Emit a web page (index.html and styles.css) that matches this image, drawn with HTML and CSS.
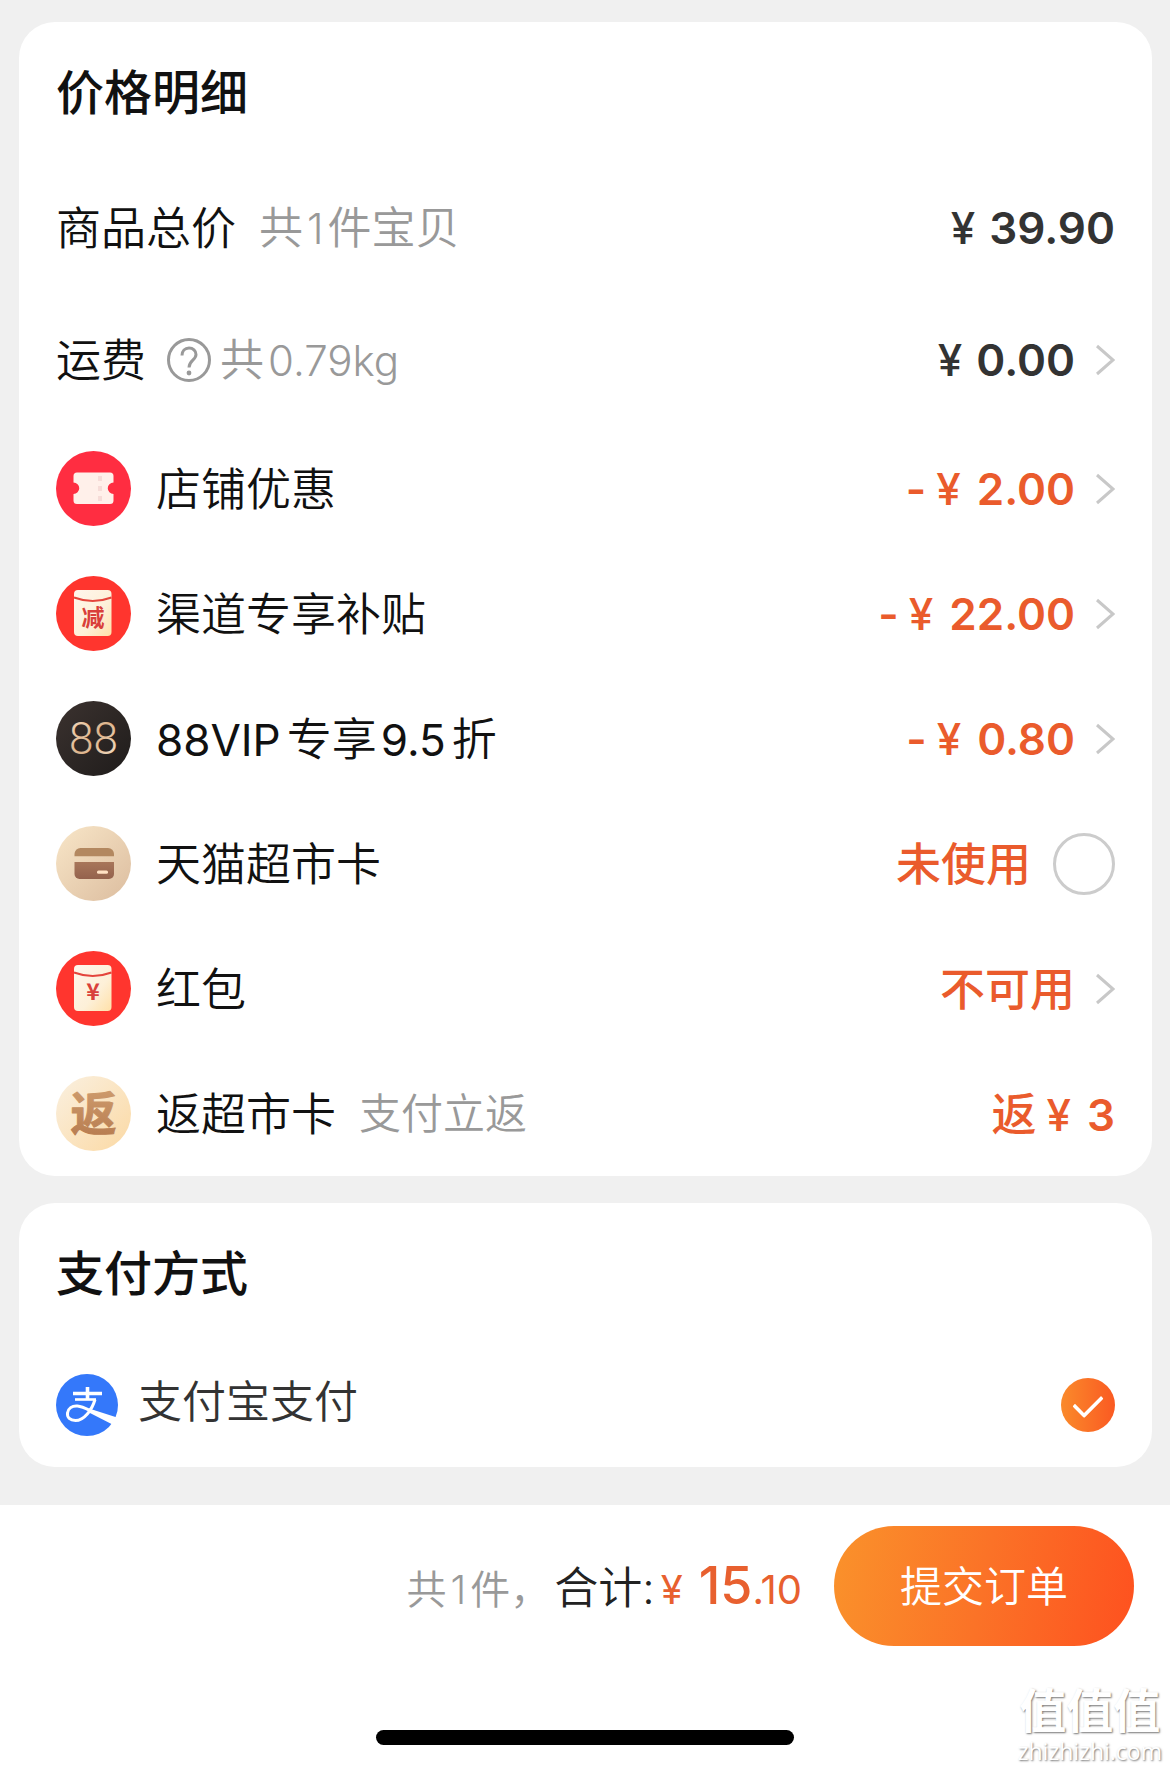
FILE: index.html
```html
<!DOCTYPE html>
<html lang="zh-CN">
<head>
<meta charset="utf-8">
<meta name="viewport" content="width=device-width, initial-scale=1">
<title>确认订单</title>
<link rel="stylesheet" href="styles.css">
</head>
<body>
<main class="content">
  <section class="card">
    <h2 class="card-title">价格明细</h2>
    <ul class="rows">
      <li class="row row-tall">
        <span class="label">商品总价</span>
        <span class="note note-spaced">共<span class="num num-inner">1</span>件宝贝</span>
        <span class="amount"><span class="yen">¥</span>39.90</span>
      </li>
      <li class="row row-tall">
        <span class="label">运费</span>
        <svg class="help" viewBox="0 0 44 44" aria-hidden="true"><circle cx="22" cy="22" r="20.5"/><path d="M15 17.500c0-4.500 3-7.500 7-7.500s7 2.800 7 6.500c0 5.500-7 6-7 13"/><circle class="help-dot" cx="22" cy="35" r="2.400"/></svg>
        <span class="note">共<span class="num num-inner">0.79kg</span></span>
        <span class="amount"><span class="yen">¥</span>0.00</span>
        <svg class="chevron" viewBox="0 0 20 32" aria-hidden="true"><path d="M2 2l16 14L2 30"/></svg>
      </li>
      <li class="row">
        <svg class="badge" viewBox="0 0 75 75" aria-hidden="true">
          <circle cx="37.500" cy="37.500" r="37.500" fill="#ff2d41"/>
          <path d="M21 21.500h33a3.500 3.500 0 0 1 3.500 3.500v6.500a5.600 5.600 0 0 0 0 11.500v6.500a3.500 3.500 0 0 1-3.500 3.500H21a3.500 3.500 0 0 1-3.500-3.500V43a5.600 5.600 0 0 0 0-11.500V25a3.500 3.500 0 0 1 3.500-3.500z" fill="#fff0ea"/>
          <path d="M44 25v26" stroke="#f6dcd8" stroke-width="4" stroke-dasharray="5 5"/>
        </svg>
        <span class="label">店铺优惠</span>
        <span class="amount discount">-<span class="yen yen-signed">¥</span>2.00</span>
        <svg class="chevron" viewBox="0 0 20 32" aria-hidden="true"><path d="M2 2l16 14L2 30"/></svg>
      </li>
      <li class="row">
        <svg class="badge" viewBox="0 0 75 75" aria-hidden="true">
          <defs>
            <linearGradient id="paper" x1="0" y1="0" x2="1" y2="1"><stop offset="0" stop-color="#fff6ec"/><stop offset=".6" stop-color="#fdf0d8"/><stop offset="1" stop-color="#ffe0a8"/></linearGradient>
          </defs>
          <circle cx="37.500" cy="37.500" r="37.500" fill="#ff352e"/>
          <rect x="18" y="14" width="37.500" height="46" rx="4" fill="url(#paper)"/>
          <path d="M18 21.500q18.750 7 37.500 0" fill="none" stroke="#e4453c" stroke-width="2"/>
          <text class="badge-char" x="37" y="50" font-size="23" fill="#d9403a">减</text>
        </svg>
        <span class="label">渠道专享补贴</span>
        <span class="amount discount">-<span class="yen yen-signed">¥</span>22.00</span>
        <svg class="chevron" viewBox="0 0 20 32" aria-hidden="true"><path d="M2 2l16 14L2 30"/></svg>
      </li>
      <li class="row">
        <svg class="badge" viewBox="0 0 75 75" aria-hidden="true">
          <defs>
            <linearGradient id="vip" x1="0" y1="0" x2="1" y2="1"><stop offset="0" stop-color="#3b322f"/><stop offset="1" stop-color="#1f1c1b"/></linearGradient>
            <linearGradient id="vipText" x1="0" y1="0" x2="1" y2="1"><stop offset="0" stop-color="#f6dcc0"/><stop offset=".5" stop-color="#dcb48c"/><stop offset="1" stop-color="#f8e6d0"/></linearGradient>
          </defs>
          <circle cx="37.500" cy="37.500" r="37.500" fill="url(#vip)"/>
          <text class="badge-num" x="37.500" y="53" font-size="44" fill="url(#vipText)">88</text>
        </svg>
        <span class="label"><span class="num">88VIP</span><span class="word">专享</span><span class="num">9.5</span><span class="word">折</span></span>
        <span class="amount discount">-<span class="yen yen-signed">¥</span>0.80</span>
        <svg class="chevron" viewBox="0 0 20 32" aria-hidden="true"><path d="M2 2l16 14L2 30"/></svg>
      </li>
      <li class="row">
        <svg class="badge" viewBox="0 0 75 75" aria-hidden="true">
          <defs>
            <linearGradient id="sand" x1="0" y1="0" x2="1" y2="1"><stop offset="0" stop-color="#f8e6c8"/><stop offset="1" stop-color="#dcbd9f"/></linearGradient>
            <linearGradient id="brown" x1="0" y1="0" x2="0" y2="1"><stop offset="0" stop-color="#a8765a"/><stop offset="1" stop-color="#94624d"/></linearGradient>
          </defs>
          <circle cx="37.500" cy="37.500" r="37.500" fill="url(#sand)"/>
          <path d="M24.500 22H52a6 6 0 0 1 6 6v2.300H18.500V28a6 6 0 0 1 6-6z" fill="#b38860"/>
          <path d="M18.500 36H58v12a5 5 0 0 1-5 5H23.500a5 5 0 0 1-5-5z" fill="url(#brown)"/>
          <rect x="41" y="44.500" width="11" height="3.200" rx="1.500" fill="#ffe1c4"/>
        </svg>
        <label class="label" for="market-card">天猫超市卡</label>
        <span class="amount discount words">未使用</span>
        <input class="pick" type="checkbox" id="market-card">
      </li>
      <li class="row">
        <svg class="badge" viewBox="0 0 75 75" aria-hidden="true">
          <circle cx="37.500" cy="37.500" r="37.500" fill="#ff352e"/>
          <rect x="18" y="14" width="37.500" height="46" rx="4" fill="url(#paper)"/>
          <path d="M18 21.500q18.750 7 37.500 0" fill="none" stroke="#e4453c" stroke-width="2"/>
          <text class="badge-char" x="37" y="49" font-size="23" fill="#d9403a">¥</text>
        </svg>
        <span class="label">红包</span>
        <span class="amount discount words">不可用</span>
        <svg class="chevron" viewBox="0 0 20 32" aria-hidden="true"><path d="M2 2l16 14L2 30"/></svg>
      </li>
      <li class="row">
        <svg class="badge" viewBox="0 0 75 75" aria-hidden="true">
          <defs>
            <linearGradient id="cream" x1="0" y1="0" x2="1" y2="1"><stop offset="0" stop-color="#faf0e0"/><stop offset="1" stop-color="#fbd9a4"/></linearGradient>
            <linearGradient id="bronze" x1="0" y1="0" x2="0" y2="1"><stop offset="0" stop-color="#d3a273"/><stop offset="1" stop-color="#b5794d"/></linearGradient>
          </defs>
          <circle cx="37.500" cy="37.500" r="37.500" fill="url(#cream)"/>
          <text class="badge-char" x="37.500" y="54" font-size="46" fill="url(#bronze)" stroke="url(#bronze)" stroke-linejoin="round">返</text>
        </svg>
        <span class="label">返超市卡</span>
        <span class="note note-spaced note-small">支付立返</span>
        <span class="amount discount words">返<span class="money"><span class="yen yen-signed">¥</span>3</span></span>
      </li>
    </ul>
  </section>

  <section class="card">
    <h2 class="card-title">支付方式</h2>
    <div class="row row-pay">
      <svg class="pay-logo" viewBox="0 0 62 62" aria-hidden="true">
        <circle cx="31" cy="31" r="31" fill="#3478fa"/>
        <g fill="none" stroke="#fff">
          <path d="M17 19.500h29M31.500 13v12" stroke-width="3.600"/>
          <path d="M19 25.500h21" stroke-width="2.600"/>
          <path d="M39 25.500C36 36 28 46.500 19.500 46.500c-5.500 0-8.500-3-8-7.500.500-4.500 4.500-7.500 10-7 6 .600 11 4 18 7" stroke-width="3"/>
        </g>
        <path d="M33 34.500l26.500 8.500q2.500.500 2 1.500l-5.500 5.800L33 38.500z" fill="#fff"/>
      </svg>
      <label class="pay-name" for="alipay">支付宝支付</label>
      <input class="radio" type="radio" name="pay" id="alipay" checked>
    </div>
  </section>
</main>

<footer class="footer">
  <div class="checkout">
    <p class="total">
      <span class="count">共<span class="num-inner">1</span>件，</span>
      <span class="sum-label">合计:</span>
      <span class="sum"><span class="sum-small">¥</span><span class="sum-big">15</span><span class="sum-small">.10</span></span>
    </p>
    <button class="submit" type="button">提交订单</button>
  </div>
  <div class="home-bar"></div>
  <div class="watermark"><span class="mark-name">值值值</span><span class="mark-site">zhizhizhi.com</span></div>
</footer>
</body>
</html>
```
FILE: styles.css
```css
* {
  box-sizing: border-box;
}

body {
  margin: 0;
  min-height: 100vh;
  display: flex;
  flex-direction: column;
  background: #f0f0f0;
  color: #111;
  font-family: Inter, "Noto Sans CJK SC", sans-serif;
}

.content {
  flex: 1;
  display: flex;
  flex-direction: column;
  gap: 27px;
  padding: 22px 18px 38px 19px;
}

.card {
  background: #fff;
  border-radius: 36px;
  padding: 0 37px;
}

.card-title {
  margin: 0;
  padding-top: 2px;
  font-size: 48px;
  font-weight: 500;
  line-height: 138px;
}

.rows {
  list-style: none;
  margin: 0;
  padding: 0;
}

.row {
  display: flex;
  align-items: center;
  height: 125px;
  white-space: nowrap;
}

.row-tall {
  height: 132px;
}

.badge {
  width: 75px;
  height: 75px;
  margin-right: 25px;
}

.badge-char {
  font-family: "Noto Sans CJK SC", sans-serif;
  font-weight: 700;
  text-anchor: middle;
}

.badge-num {
  font-family: Roboto, sans-serif;
  font-weight: 300;
  text-anchor: middle;
}

.label {
  padding-bottom: 5px;
  font-size: 45px;
  font-weight: 350;
}

.label .num {
  font-size: 44px;
  font-weight: 400;
}

.word {
  margin: 0 4px 0 6px;
}

.note {
  padding-bottom: 6px;
  font-size: 44px;
  font-weight: 350;
  color: #999;
}

.note .num {
  font-size: 42px;
}

.num-inner {
  margin: 0 4px;
}

.note-small {
  font-size: 42px;
}

.note-spaced {
  margin-left: 23px;
}

.help {
  width: 44px;
  height: 44px;
  margin: 0 9px 0 21px;
  fill: none;
  stroke: #999;
  stroke-width: 3;
}

.help-dot {
  fill: #999;
  stroke: none;
}

.amount {
  margin-left: auto;
  font-size: 44px;
  font-weight: 600;
  color: #333;
}

.discount {
  color: #ea5b2c;
}

.words {
  padding-bottom: 5px;
  font-size: 45px;
  font-weight: 500;
}

.money {
  font-size: 44px;
  font-weight: 600;
}

.yen {
  margin-right: 14px;
  font-weight: 500;
}

.yen-signed {
  margin-left: 10px;
  margin-right: 16px;
}

.chevron {
  width: 20px;
  height: 32px;
  margin-left: 20px;
  fill: none;
  stroke: #c8c8c8;
  stroke-width: 3;
}

.pick {
  appearance: none;
  width: 62px;
  height: 62px;
  margin: 0 0 0 22px;
  border: 3px solid #ccc;
  border-radius: 50%;
}

.row-pay {
  gap: 20px;
  height: 124px;
}

.pay-logo {
  width: 62px;
  height: 62px;
}

.pay-name {
  padding-bottom: 12px;
  font-size: 44px;
  font-weight: 350;
  color: #333;
}

.radio {
  appearance: none;
  display: grid;
  place-items: center;
  width: 54px;
  height: 54px;
  margin: 0 0 0 auto;
  border-radius: 50%;
  background: linear-gradient(90deg, #fa8a2b, #fa5a22);
}

.radio:checked::after {
  content: "";
  width: 24px;
  height: 13px;
  margin-bottom: 6px;
  border: solid #fff;
  border-width: 0 0 4px 4px;
  border-radius: 2px;
  transform: rotate(-45deg);
}

.footer {
  position: relative;
  padding: 21px 36px 24px;
  background: #fff;
}

.checkout {
  display: flex;
  align-items: center;
  justify-content: flex-end;
  gap: 32px;
  white-space: nowrap;
}

.total {
  display: flex;
  align-items: baseline;
  margin: 0;
  padding-bottom: 2px;
}

.count {
  font-size: 40px;
  font-weight: 350;
  color: #999;
}

.sum-label {
  margin-left: 4px;
  font-size: 44px;
  font-weight: 350;
  color: #222;
}

.sum {
  margin-left: 6px;
  color: #e8602f;
}

.sum-small {
  font-size: 40px;
}

.sum-big {
  margin-left: 16px;
  font-size: 52px;
  font-weight: 500;
}

.submit {
  width: 300px;
  height: 120px;
  padding: 0 0 6px;
  border: 0;
  border-radius: 60px;
  background: linear-gradient(100deg, #fa922b, #fb7227 50%, #fe511f);
  color: #fff;
  font: 350 42px Inter, "Noto Sans CJK SC", sans-serif;
}

.home-bar {
  width: 38%;
  height: 15px;
  margin: 84px auto 0;
  border-radius: 8px;
  background: #000;
}

/* Site mark laid over the corner of the footer */
.watermark {
  position: absolute;
  right: 8px;
  bottom: 6px;
  display: flex;
  flex-direction: column;
  align-items: center;
  color: #fff;
  text-shadow: 1px 1px 2px #777;
}

.mark-name {
  font-size: 47px;
  font-weight: 700;
  line-height: 56px;
}

.mark-site {
  font: 400 23px/24px "Open Sans", sans-serif;
}
```
